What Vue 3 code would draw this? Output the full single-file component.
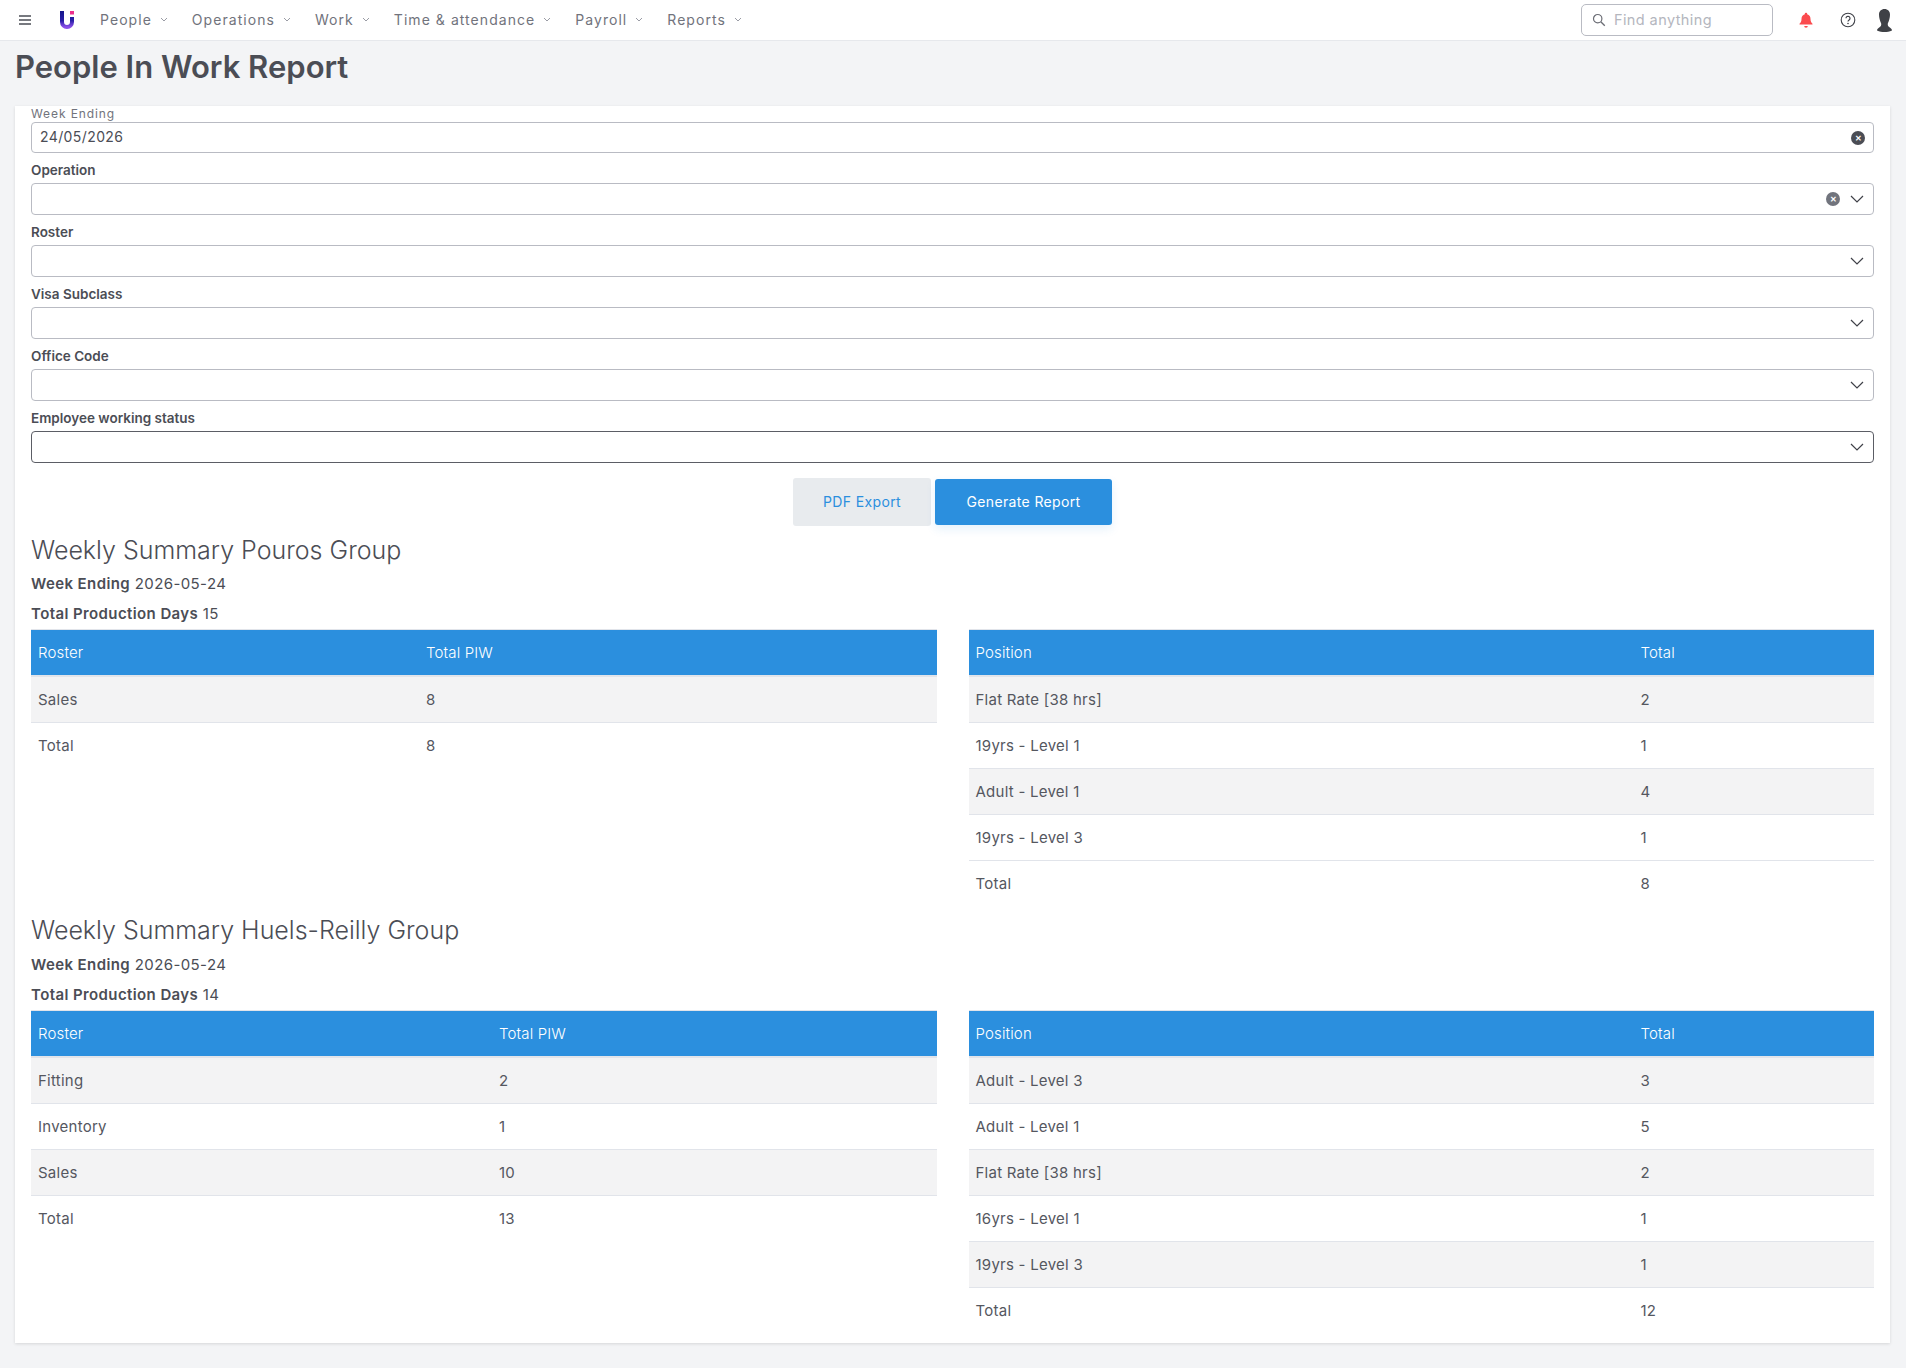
<template>
  <div class="page">
    <header class="navbar">
      <svg class="burger" width="14" height="12" viewBox="0 0 14 12">
        <path d="M1 2h12M1 6h12M1 10h12" stroke="#4b4d55" stroke-width="1.6" fill="none" />
      </svg>
      <svg class="logo" width="14" height="18" viewBox="0 0 14 18">
        <defs>
          <linearGradient id="logo-grad" x1="0" y1="0" x2="0" y2="1">
            <stop offset="0" stop-color="#15158a" />
            <stop offset="0.6" stop-color="#2a1fa8" />
            <stop offset="1" stop-color="#8a4fe8" />
          </linearGradient>
        </defs>
        <path d="M2 0v11a5 5 0 0 0 10 0V6" stroke="url(#logo-grad)" stroke-width="4" fill="none" />
        <rect x="10" y="0" width="4" height="3.5" fill="#ec2f8c" />
      </svg>
      <nav class="menu">
        <a v-for="item in menu" :key="item" class="menu-item">
          <span>{{ item }}</span>
          <svg width="8" height="5" viewBox="0 0 8 5"><path d="M1 1l3 3 3-3" stroke="#9a9ca5" stroke-width="1" fill="none" /></svg>
        </a>
      </nav>
      <div class="nav-right">
        <div class="search">
          <svg width="14" height="14" viewBox="0 0 14 14">
            <circle cx="5.7" cy="5.7" r="4.2" stroke="#6b6d75" stroke-width="1.2" fill="none" />
            <path d="M8.8 8.8l4 4" stroke="#6b6d75" stroke-width="1.3" />
          </svg>
          <span>Find anything</span>
        </div>
        <svg class="bell" width="14" height="16" viewBox="0 0 14 16">
          <path d="M7 0.8a1.2 1.2 0 0 1 1.2 1.4C10.4 2.8 11.5 4.6 11.5 7c0 2.6 1 3.6 2 4.8V12.6H.5v-.8C1.500 10.600 2.500 9.600 2.500 7c0-2.400 1.100-4.200 3.300-4.800A1.200 1.200 0 0 1 7 .8z" fill="#fb4b4e" />
          <path d="M5.200 14h3.600a1.800 1.800 0 0 1-3.600 0z" fill="#fb4b4e" />
        </svg>
        <svg class="help" width="16" height="16" viewBox="0 0 16 16">
          <circle cx="8" cy="8" r="6.800" stroke="#3f4148" stroke-width="1.100" fill="none" />
          <path d="M6 6.300a2 2 0 1 1 3.100 1.700c-.7.500-1.100.8-1.100 1.600" stroke="#3f4148" stroke-width="1.200" fill="none" />
          <circle cx="8" cy="11.500" r=".8" fill="#3f4148" />
        </svg>
        <svg class="avatar" width="15" height="23" viewBox="0 0 15 23">
          <path d="M7.500 0C10.800 0 13 2.200 13 5.800C13 9 12 12 10.800 14.500C10.600 16.500 11 17.300 12.500 18.300C13.800 19.200 15 20 15 21.500C12.500 22.800 10 23 7.500 23S2.500 22.800 0 21.500C0 20 1.200 19.200 2.500 18.300C4 17.300 4.400 16.500 4.200 14.500C3 12 2 9 2 5.800C2 2.200 4.200 0 7.500 0z" fill="#3f4146" />
        </svg>
      </div>
    </header>

    <h1 class="page-title">People In Work Report</h1>

    <main class="card">
      <label class="date-label">Week Ending</label>
      <div class="field date-field">
        <span class="date-value">24/05/2026</span>
        <span class="clear dark">✕</span>
      </div>

      <div v-for="f in selects" :key="f.label" class="select-group">
        <label class="select-label">{{ f.label }}</label>
        <div class="field" :class="{ focused: f.focused }">
          <span v-if="f.clear" class="clear">✕</span>
          <svg class="chevron" width="14" height="8" viewBox="0 0 14 8"><path d="M1 1l6 6 6-6" stroke="#3f4148" stroke-width="1.200" fill="none" /></svg>
        </div>
      </div>

      <div class="actions">
        <button class="btn btn-light">PDF Export</button>
        <button class="btn btn-primary">Generate Report</button>
      </div>

      <section v-for="g in groups" :key="g.name" class="summary">
        <h2 class="summary-title">Weekly Summary {{ g.name }}</h2>
        <p class="meta"><b>Week Ending</b> 2026-05-24</p>
        <p class="meta"><b>Total Production Days</b> {{ g.days }}</p>
        <div class="tables">
          <table>
            <colgroup><col :style="{ width: g.rosterCol + 'px' }" /><col /></colgroup>
            <thead><tr><th>Roster</th><th>Total PIW</th></tr></thead>
            <tbody>
              <tr v-for="r in g.rosters" :key="r[0]"><td>{{ r[0] }}</td><td>{{ r[1] }}</td></tr>
            </tbody>
          </table>
          <table>
            <colgroup><col :style="{ width: '665px' }" /><col /></colgroup>
            <thead><tr><th>Position</th><th>Total</th></tr></thead>
            <tbody>
              <tr v-for="r in g.positions" :key="r[0]"><td>{{ r[0] }}</td><td>{{ r[1] }}</td></tr>
            </tbody>
          </table>
        </div>
      </section>
    </main>
  </div>
</template>

<script setup>
const menu = ['People', 'Operations', 'Work', 'Time & attendance', 'Payroll', 'Reports']

const selects = [
  { label: 'Operation', clear: true },
  { label: 'Roster' },
  { label: 'Visa Subclass' },
  { label: 'Office Code' },
  { label: 'Employee working status', focused: true }
]

const groups = [
  {
    name: 'Pouros Group',
    days: 15,
    rosterCol: 388,
    rosters: [['Sales', 8], ['Total', 8]],
    positions: [
      ['Flat Rate [38 hrs]', 2],
      ['19yrs - Level 1', 1],
      ['Adult - Level 1', 4],
      ['19yrs - Level 3', 1],
      ['Total', 8]
    ]
  },
  {
    name: 'Huels-Reilly Group',
    days: 14,
    rosterCol: 461,
    rosters: [['Fitting', 2], ['Inventory', 1], ['Sales', 10], ['Total', 13]],
    positions: [
      ['Adult - Level 3', 3],
      ['Adult - Level 1', 5],
      ['Flat Rate [38 hrs]', 2],
      ['16yrs - Level 1', 1],
      ['19yrs - Level 3', 1],
      ['Total', 12]
    ]
  }
]
</script>

<style>
html, body {
  margin: 0;
  background: #f3f4f6;
}
</style>

<style scoped>
.page {
  height: 1368px;
  overflow: hidden;
  font-family: Inter, "Open Sans", sans-serif;
  color: #4b4d55;
}

.navbar {
  display: flex;
  align-items: center;
  height: 40px;
  padding-left: 18px;
  background: #fff;
  border-bottom: 1px solid #e6e8ec;
}

.logo { margin-left: 28px; }

.menu {
  display: flex;
  margin-left: 26px;
  margin-top: -2px;
  gap: 24px;
}

.menu-item {
  display: flex;
  align-items: center;
  gap: 8px;
  font-size: 14px;
  letter-spacing: 1.05px;
  color: #71737c;
}

.nav-right {
  display: flex;
  align-items: center;
  margin-left: auto;
  padding-right: 14px;
}

.search {
  display: flex;
  align-items: center;
  gap: 8px;
  box-sizing: border-box;
  width: 192px;
  height: 32px;
  padding-left: 10px;
  padding-bottom: 1px;
  border: 1px solid #b9bbc3;
  border-radius: 5px;
  font-size: 14.5px;
  letter-spacing: 0.4px;
  color: #b4b6be;
}

.bell { margin-left: 26px; }
.help { margin-left: 27px; }
.avatar { margin-left: 21px; }

.page-title {
  margin: 0;
  padding: 4px 15px 0;
  height: 55px;
  box-sizing: border-box;
  font-size: 31px;
  line-height: 44px;
  font-weight: 600;
  color: #4b4d55;
}

.card {
  margin: 10px 16px 0 15px;
  padding: 1px 16px 0;
  height: 1237px;
  box-sizing: border-box;
  background: #fff;
  box-shadow: 0 1px 3px rgba(0, 0, 0, 0.12);
}

.date-label {
  display: block;
  height: 15px;
  margin-top: -1px;
  margin-bottom: 1px;
  font-size: 12px;
  line-height: 15px;
  letter-spacing: 0.9px;
  color: #71737c;
}

.field {
  display: flex;
  align-items: center;
  justify-content: flex-end;
  box-sizing: border-box;
  height: 32px;
  padding: 0 9px 0 8px;
  border: 1px solid #b9bbc3;
  border-radius: 4px;
}

.field.focused { border-color: #5b5d65; }

.date-field {
  height: 31px;
  justify-content: space-between;
  padding-right: 8px;
}

.date-value {
  font-size: 14px;
  letter-spacing: 0.4px;
  margin-top: -2px;
}

.clear {
  display: flex;
  align-items: center;
  justify-content: center;
  width: 14px;
  height: 14px;
  border-radius: 50%;
  background: #71747d;
  color: #fff;
  font-size: 8px;
  font-weight: 700;
}

.clear.dark { background: #4b4d55; }

.chevron { margin-left: 10px; }

.select-group { margin-top: 7px; }

.select-label {
  display: block;
  height: 23px;
  font-size: 13.5px;
  line-height: 20px;
  font-weight: 600;
  color: #4b4d55;
}

.actions {
  display: flex;
  justify-content: center;
  align-items: center;
  gap: 4px;
  margin-top: 15px;
}

.btn {
  box-sizing: border-box;
  border: none;
  font-family: inherit;
  font-size: 14px;
  letter-spacing: 0.35px;
  padding-bottom: 3px;
}

.btn-light {
  width: 138px;
  height: 48px;
  border-radius: 3px;
  background: #e8ebee;
  color: #2b8fde;
}

.btn-primary {
  width: 177px;
  height: 46px;
  border-radius: 3px;
  background: #2b8fde;
  color: #fff;
  box-shadow: 0 4px 10px rgba(43, 143, 222, 0.12);
}

.summary-title {
  margin: 0;
  font-size: 25px;
  line-height: 36px;
  font-weight: 300;
  color: #4b4d55;
}

.actions + .summary .summary-title { margin-top: 6px; }
.summary + .summary .summary-title { margin-top: 5px; margin-bottom: 1px; }

.meta {
  margin: 0;
  height: 30px;
  font-size: 15px;
  line-height: 32px;
  letter-spacing: 0.4px;
}

.meta b { font-weight: 600; }

.tables {
  display: grid;
  grid-template-columns: 1fr 1fr;
  gap: 32px;
  align-items: start;
  margin-top: 1px;
}

table {
  width: 100%;
  table-layout: fixed;
  border-collapse: separate;
  border-spacing: 0;
  font-size: 15px;
}

th {
  height: 48px;
  padding: 0 7px;
  background: #2b8fde;
  border-top: 1px solid #e1e4ea;
  border-bottom: 2px solid #e1e4ea;
  box-sizing: border-box;
  color: #fff;
  font-weight: 300;
  letter-spacing: 0.15px;
  text-align: left;
}

td {
  height: 46px;
  padding: 0 7px;
  box-sizing: border-box;
  border-bottom: 1px solid #e1e4ea;
  color: #55575f;
  letter-spacing: 0.25px;
}

tbody tr:nth-child(odd):not(:last-child) td { background: #f3f3f4; }
tbody tr:last-child td { border-bottom-color: transparent; }
</style>
